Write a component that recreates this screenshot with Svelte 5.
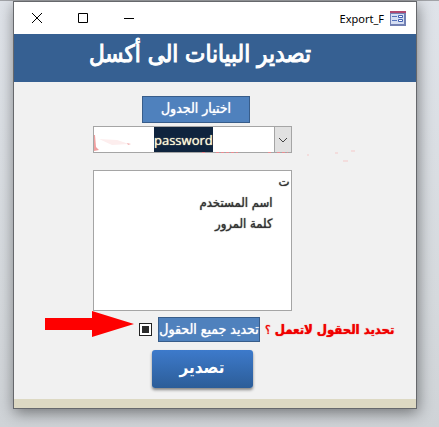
<script lang="ts">
  const tables = ["password"];
  const fields = ["اسم المستخدم", "كلمة المرور"];

  let table = $state("password");
  let allFields = $state(false);
  let someFields = $state(true);
</script>

<main class="desktop">
  <section class="window">
    <div class="titlebar">
      <button type="button" aria-label="Close">
        <svg width="12" height="12" viewBox="0 0 12 12"><path d="M1 1l10 10M11 1L1 11" /></svg>
      </button>
      <button type="button" aria-label="Maximize">
        <svg width="12" height="12" viewBox="0 0 12 12"><path d="M1.500 1.500h9v9h-9z" /></svg>
      </button>
      <button type="button" aria-label="Minimize">
        <svg width="12" height="12" viewBox="0 0 12 12"><path d="M1 6.500h10" /></svg>
      </button>
      <span class="caption">Export_F</span>
      <svg class="form-icon" width="16" height="15" viewBox="0 0 16 15">
        <path d="M0 0h16v15H0z" fill="#7381b4" />
        <path d="M1 3h13v10H1z" fill="#d5def3" />
        <path d="M0 0h16v2H0z" fill="#b0486f" />
        <path d="M2 5h5v1H2zM2 9h5v1H2z" fill="#5674bd" />
        <path d="M8.500 4.500h4v2h-4zM8.500 8.500h4v2h-4z" fill="#fff" stroke="#4260b0" />
      </svg>
    </div>

    <header><h1 dir="rtl">تصدير البيانات الى أكسل</h1></header>

    <form onsubmit={(e) => e.preventDefault()}>
      <label class="tag pick" for="table" dir="rtl">اختيار الجدول</label>
      <div class="combo">
        <select id="table" bind:value={table}>
          {#each tables as name}
            <option>{name}</option>
          {/each}
        </select>
        <span class="drop" aria-hidden="true">
          <svg width="10" height="6" viewBox="0 0 10 6"><path d="M1 1l4 4 4-4" /></svg>
        </span>
        <svg class="marks" viewBox="0 0 272 30" aria-hidden="true">
          <path d="M0 8l1 0 1 12 3 3-5 1z" fill="#f0a0a0" />
          <path d="M5 12l18 1 12 4-17 1z" fill="#fdeeee" />
          <path d="M33 16l4 1-3 1z" fill="#f3b4b4" />
          <path d="M108 25.500h4m10 0h22m30 0h3m6 0h11" stroke="#e88b91" stroke-dasharray="3 2" />
          <path d="M213 28h2m26-2h3m13-2h4m-12 10h5" stroke="#f5c9c9" />
        </svg>
      </div>

      <ul class="fields" dir="rtl">
        <li class="head">ت</li>
        {#each fields as field}
          <li>{field}</li>
        {/each}
      </ul>

      <div class="all-row">
        <svg class="arrow" width="90" height="27" viewBox="0 0 90 27" aria-hidden="true">
          <path d="M0 7h47V0l42 13-42 13v-7H0z" fill="#fe0000" />
        </svg>
        <input id="all" type="checkbox" bind:checked={allFields} bind:indeterminate={someFields} />
        <label class="tag" for="all" dir="rtl">تحديد جميع الحقول</label>
        <strong class="note" dir="rtl">تحديد الحقول لاتعمل <span>؟</span></strong>
      </div>

      <button class="export" type="submit" dir="rtl">تصدير</button>
    </form>

    <footer></footer>
  </section>
</main>

<style>
  :global(body) {
    margin: 0;
    background: #d3d7dc;
  }
  .desktop {
    box-sizing: border-box;
    min-height: 100vh;
    padding: 0 22px 18px 13px;
    background: linear-gradient(#dfe3e9, #d5d9dd 70%, #cfd3d7);
    border-top: 1px solid #a2a4a8;
    font-family: "DejaVu Sans Condensed", "DejaVu Sans", sans-serif;
  }
  .window {
    border: 1px solid #66686c;
    background: #f1f1f1;
    box-shadow: 1px 4px 14px rgba(0, 0, 0, 0.45);
  }
  .titlebar {
    display: flex;
    align-items: center;
    height: 32px;
    padding: 0 10px 0 0;
    background: #fff;
  }
  .titlebar button {
    display: grid;
    place-items: center;
    width: 46px;
    height: 30px;
    padding: 0;
    border: none;
    background: none;
  }
  .titlebar button path {
    fill: none;
    stroke: #000;
  }
  .caption {
    margin-left: auto;
    margin-right: 6px;
    font: 12px "Noto Sans", "Open Sans", sans-serif;
    font-size: 11px;
  }
  header {
    height: 48px;
    background: #366092;
    color: #fff;
    text-align: center;
  }
  h1 {
    margin: 0;
    padding-right: 30px;
    font-size: 24px;
    font-weight: 400;
    line-height: 40px;
    -webkit-text-stroke: 1px #fff;
    white-space: nowrap;
  }
  form {
    display: flex;
    flex-direction: column;
    align-items: center;
    padding: 14px 0 11px;
  }
  .tag {
    box-sizing: border-box;
    border: 1px solid #385d8a;
    background: #4f81bd;
    color: #fff;
    font-size: 14px;
    line-height: 23px;
    text-align: center;
    text-shadow: 0 0 1px #fff;
    white-space: nowrap;
  }
  .pick {
    width: 108px;
    margin-right: 38px;
    padding-bottom: 2px;
  }
  .combo,
  .fields {
    box-sizing: border-box;
    width: 49%;
    min-width: 199px;
    margin-right: 46px;
    border: 1px solid #a5a5a5;
    background: #fff;
  }
  .combo {
    position: relative;
    display: flex;
    height: 27px;
    margin-top: 3px;
  }
  select {
    appearance: none;
    margin: 0 auto;
    padding: 0;
    border: none;
    border-radius: 0;
    background: #0f243e;
    color: #fff8d8;
    font: 13px "Open Sans", "Noto Sans", sans-serif;
    text-shadow: 0 0 1px #fff8d8;
    outline: none;
  }
  .drop {
    display: grid;
    place-items: center;
    width: 16px;
    border-left: 1px solid #a5a5a5;
    background: #e1e1e1;
  }
  .drop path {
    fill: none;
    stroke: #444;
  }
  .marks {
    position: absolute;
    top: 0;
    left: 0;
    width: 272px;
    height: 30px;
    overflow: visible;
    pointer-events: none;
  }
  .fields {
    height: 141px;
    margin-top: 17px;
    margin-bottom: 0;
    padding: 0;
    color: #333;
    font-size: 13px;
    line-height: 21px;
    text-shadow: 0 0 1px #333;
    list-style: none;
  }
  .fields li {
    padding-right: 18px;
  }
  .fields .head {
    padding-right: 1px;
  }
  .all-row {
    display: flex;
    align-items: center;
    align-self: stretch;
    margin-top: 6px;
    padding-left: 31px;
  }
  .arrow {
    margin-top: -10px;
  }
  .all-row .tag {
    width: 102px;
  }
  input {
    appearance: none;
    display: grid;
    place-items: center;
    box-sizing: border-box;
    width: 13px;
    height: 13px;
    margin: 0 6px 0 4px;
    border: 1px solid #222;
    background: #fff;
  }
  input:indeterminate::before,
  input:checked::before {
    content: "";
    width: 7px;
    height: 7px;
    background: #2b2b2b;
  }
  .note {
    margin-left: 5px;
    color: #f00000;
    font-size: 13px;
    text-shadow: 0 0 1px #f00000;
    white-space: nowrap;
  }
  .note span {
    font-size: 12px;
    font-weight: 400;
  }
  .export {
    width: 101px;
    height: 38px;
    margin-top: 8px;
    margin-right: 26px;
    padding: 0 0 4px;
    border: none;
    border-radius: 3px;
    background: linear-gradient(#3d7acb, #2c5d98);
    box-shadow: 0 2px 3px rgba(0, 0, 0, 0.45);
    color: #fff;
    font-family: inherit;
    font-size: 17px;
    font-weight: 700;
  }
  footer {
    height: 9px;
    background: #ddd9c3;
  }
</style>
